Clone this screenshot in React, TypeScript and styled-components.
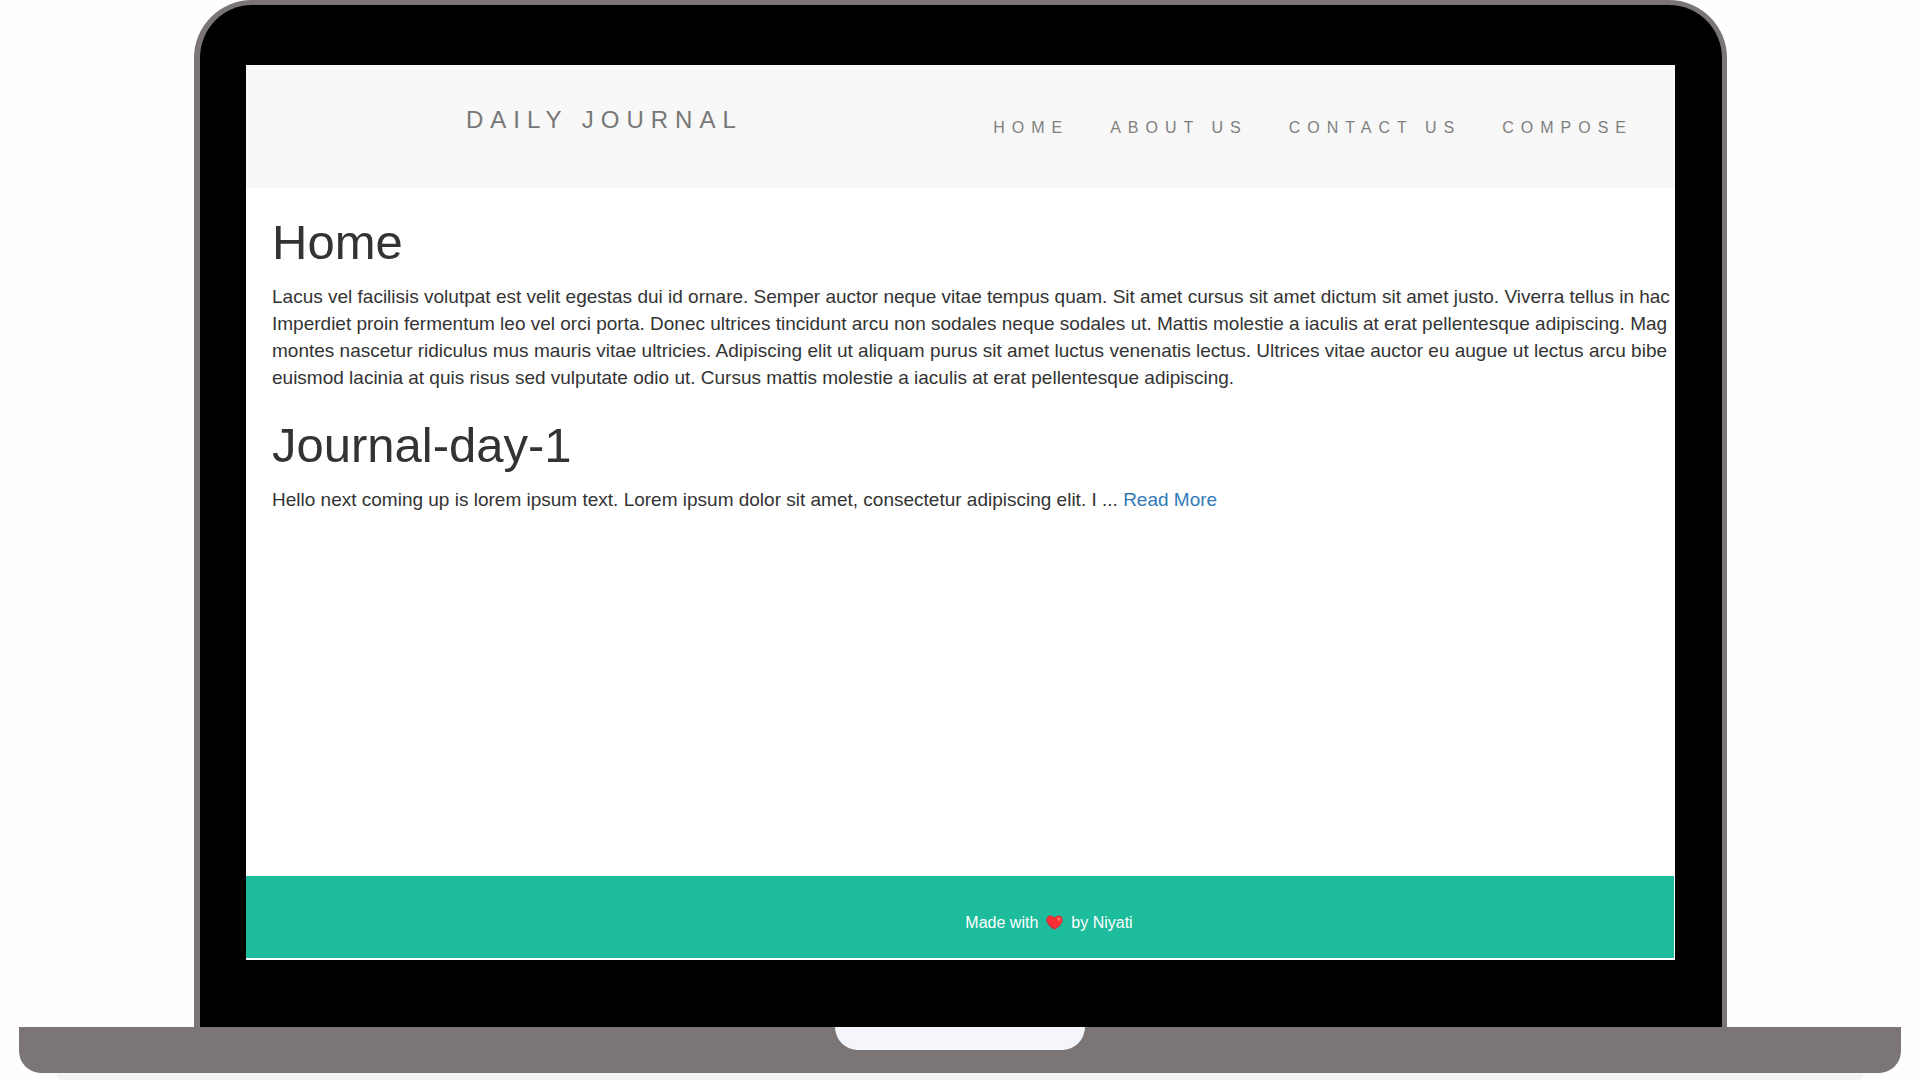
import React from "react";
import styled, { createGlobalStyle } from "styled-components";

const GlobalStyle = createGlobalStyle`
  *, *::before, *::after { box-sizing: border-box; }
  body {
    margin: 0;
    background: #fefefe;
    color: #333333;
    font-family: "Liberation Sans", Arial, Helvetica, sans-serif;
    font-size: 19px;
    line-height: 27px;
  }
`;

const Stage = styled.div`
  display: flex;
  flex-direction: column;
  height: 100vh;
  overflow: hidden;
`;

const Lid = styled.div`
  flex: 1;
  min-height: 0;
  display: flex;
  margin: 0 193px 0 194px;
  padding: 60px 47px 67px 46px;
  border: 5px solid #7b7675;
  border-width: 5px 5px 0 6px;
  border-radius: 58px 58px 0 0;
  background: #000000;
`;

const Screen = styled.div`
  flex: 1;
  min-width: 0;
  display: flex;
  flex-direction: column;
  overflow: hidden;
  padding: 0 1px 2px 0;
  background: #ffffff;
`;

const Navbar = styled.header`
  display: flex;
  justify-content: space-between;
  align-items: flex-start;
  height: 123px;
  margin-right: -1px;
  padding: 41px 42px 0 15.4%;
  background: #f8f8f8;
`;

const Brand = styled.a`
  color: #777777;
  font-size: 24px;
  letter-spacing: 7px;
  text-decoration: none;
  white-space: nowrap;
`;

const Nav = styled.nav`
  display: flex;
  gap: 41px;
  padding-top: 8px;
`;

const NavLink = styled.a`
  color: #7f7f7f;
  font-size: 16px;
  letter-spacing: 7px;
  text-decoration: none;
  white-space: nowrap;
`;

const Content = styled.main`
  flex: 1;
  min-height: 0;
  overflow: hidden;
  padding: 0 0 0 26px;
`;

const Title = styled.h1`
  margin: 27px 0 14px;
  font-size: 49px;
  font-weight: 500;
  line-height: 54px;
`;

const Text = styled.p`
  margin: 0 0 14px;
  white-space: nowrap;
`;

const Line = styled.span`
  display: block;
`;

const MoreLink = styled.a`
  color: #337ab7;
  text-decoration: none;
`;

const Footer = styled.footer`
  display: flex;
  justify-content: center;
  align-items: center;
  gap: 8px;
  height: 82px;
  padding: 10px 0 0 178px;
  background: #1dbc9c;
  color: #ffffff;
  font-size: 16px;
`;

const Base = styled.div`
  display: flex;
  justify-content: center;
  height: 46px;
  margin: 0 19px;
  border-radius: 0 0 22px 22px;
  background: #7b7675;
`;

const Notch = styled.div`
  width: 250px;
  height: 23px;
  border-radius: 0 0 23px 23px;
  background: #f4f6fb;
`;

const Shadow = styled.div`
  height: 7px;
  margin: 0 56px;
  border-radius: 0 0 7px 7px;
  background: #f4f4f4;
`;

const links = ["HOME", "ABOUT US", "CONTACT US", "COMPOSE"];

const homeLines = [
  "Lacus vel facilisis volutpat est velit egestas dui id ornare. Semper auctor neque vitae tempus quam. Sit amet cursus sit amet dictum sit amet justo. Viverra tellus in hac",
  "Imperdiet proin fermentum leo vel orci porta. Donec ultrices tincidunt arcu non sodales neque sodales ut. Mattis molestie a iaculis at erat pellentesque adipiscing. Mag",
  "montes nascetur ridiculus mus mauris vitae ultricies. Adipiscing elit ut aliquam purus sit amet luctus venenatis lectus. Ultrices vitae auctor eu augue ut lectus arcu bibe",
  "euismod lacinia at quis risus sed vulputate odio ut. Cursus mattis molestie a iaculis at erat pellentesque adipiscing.",
];

function Heart() {
  return (
    <svg width="17" height="15" viewBox="0 0 17 15" role="img" aria-label="love">
      <path
        d="M8.5 14.8C6.2 13.4.3 9.4.3 4.8.3 2.2 2.2.4 4.5.4c1.7 0 3.200.9 4 2.400.8-1.500 2.300-2.400 4-2.400 2.300 0 4.200 1.800 4.200 4.400 0 4.600-5.900 8.600-8.200 10z"
        fill="#cb2d3e"
      />
      <path
        d="M9 13.600C6.500 12 1.500 8.500 1.300 4.700 1.300 2.600 2.700 1 4.700 1 6.300 1 7.800 2.100 8.500 3.700 9.200 2 10.700.9 12.400.9c2.200 0 3.800 1.600 3.800 3.900 0 4-5 7.300-7.200 8.800z"
        fill="#fa2f33"
      />
      <ellipse cx="13" cy="4" rx="1.300" ry="1.900" transform="rotate(-30 13 4)" fill="#ff7468" />
    </svg>
  );
}

export default function App() {
  return (
    <>
      <GlobalStyle />
      <Stage>
        <Lid>
          <Screen>
            <Navbar>
              <Brand href="#">DAILY JOURNAL</Brand>
              <Nav>
                {links.map((label) => (
                  <NavLink href="#" key={label}>
                    {label}
                  </NavLink>
                ))}
              </Nav>
            </Navbar>
            <Content>
              <Title>Home</Title>
              <Text>
                {homeLines.map((line) => (
                  <Line key={line}>{line}</Line>
                ))}
              </Text>
              <Title>Journal-day-1</Title>
              <Text>
                Hello next coming up is lorem ipsum text. Lorem ipsum dolor sit amet, consectetur adipiscing elit. I ...{" "}
                <MoreLink href="#">Read More</MoreLink>
              </Text>
            </Content>
            <Footer>
              <span>Made with</span>
              <Heart />
              <span>by Niyati</span>
            </Footer>
          </Screen>
        </Lid>
        <Base>
          <Notch />
        </Base>
        <Shadow />
      </Stage>
    </>
  );
}
